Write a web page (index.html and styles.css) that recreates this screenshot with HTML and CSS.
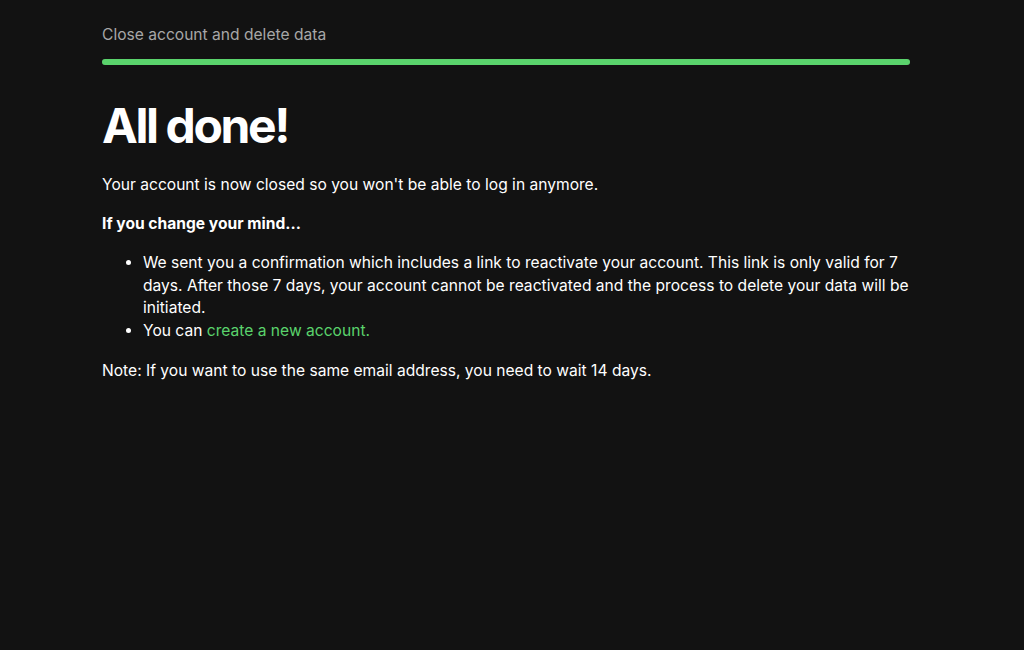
FILE: index.html
```html
<!DOCTYPE html>
<html lang="en">
<head>
<meta charset="utf-8">
<title>All done</title>
<link rel="stylesheet" href="styles.css">
</head>
<body>
<main class="page">
  <header class="top">
    <div class="crumb">Close account and delete data</div>
    <div class="progress"><div class="progress-fill"></div></div>
  </header>
  <h1 class="title">All done!</h1>
  <p class="text">Your account is now closed so you won't be able to log in anymore.</p>
  <p class="text strong">If you change your mind...</p>
  <ul class="list">
    <li>We sent you a confirmation which includes a link to reactivate your account. This link is only valid for 7 days. After those 7 days, your account cannot be reactivated and the process to delete your data will be initiated.</li>
    <li>You can <a class="link" href="#">create a new account.</a></li>
  </ul>
  <p class="text">Note: If you want to use the same email address, you need to wait 14 days.</p>
</main>
</body>
</html>
```
FILE: styles.css
```css
html, body {
  margin: 0;
  padding: 0;
  background: #121212;
  height: 100%;
}
body {
  font-family: Inter, "Liberation Sans", sans-serif;
  color: #ffffff;
  font-size: 15.6px;
  line-height: 22.5px;
}
.page {
  width: 808px;
  margin: 0 0 0 102px;
  padding-top: 24px;
}
.crumb {
  color: #a7a7a7;
  font-size: 15.6px;
  line-height: 22px;
}
.progress {
  margin-top: 13px;
  height: 6px;
  border-radius: 3px;
  background: #2a2a2a;
}
.progress-fill {
  height: 100%;
  width: 100%;
  border-radius: 3px;
  background: #5ad36c;
}
.title {
  margin: 32px 0 0 0;
  font-size: 48px;
  line-height: 58px;
  font-weight: 700;
  letter-spacing: -2.4px;
}
.text {
  margin: 19px 0 0 0;
}
.strong {
  margin-top: 16px;
  font-weight: 700;
}
.list {
  margin: 17px 0 0 0;
  padding-left: 41px;
}
.link {
  color: #5ad36c;
  text-decoration: none;
}
.list + .text {
  margin-top: 18px;
}
```
